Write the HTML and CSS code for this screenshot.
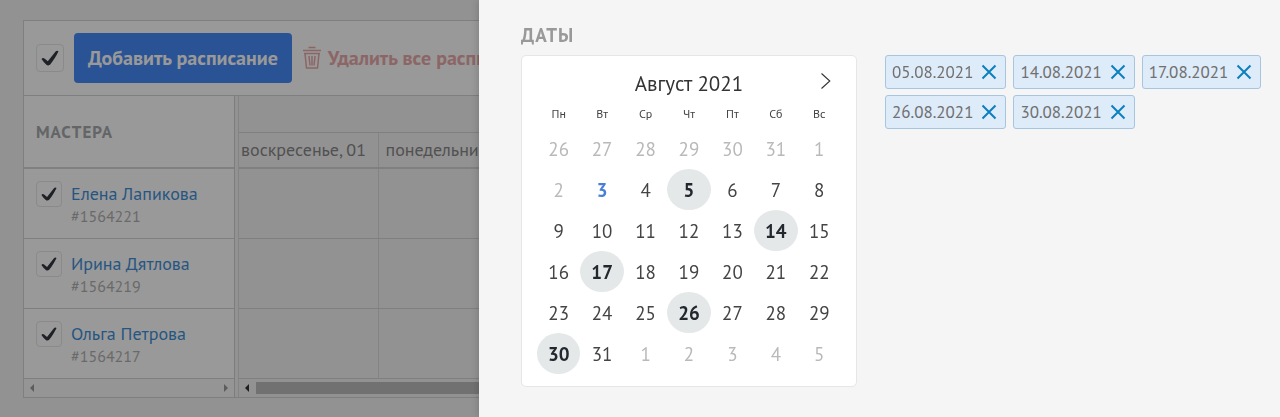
FILE: index.html
```html
<!DOCTYPE html>
<html lang="ru">
<head>
    <meta charset="UTF-8">
    <meta name="viewport" content="width=device-width, initial-scale=1.0">
    <title>Расписание мастеров</title>
    <link rel="stylesheet" href="styles.css">
</head>
<body>

    <main class="board">
        <div class="toolbar">
            <input type="checkbox" class="check check-all" aria-label="Выбрать всех" checked>
            <button type="button" class="btn-add">Добавить расписание</button>
            <button type="button" class="btn-delete">
                <svg width="20" height="24" viewBox="0 0 20 24" fill="none" stroke="currentColor" stroke-width="1.5">
                    <path d="M1 4.500h18M6.500 1.500h7M2 7.500h16M3 7.500l1.500 14.500h11L17 7.500M7 10l1 9.500M10 10v9.500M13 10l-1 9.500"/>
                </svg>
                Удалить все расписания
            </button>
        </div>

        <div class="columns">
            <section class="masters">
                <h2 class="masters-title">Мастера</h2>
                <ul class="masters-list">
                    <li class="master">
                        <input type="checkbox" class="check" id="m1564221" checked>
                        <label for="m1564221"><span class="master-name">Елена Лапикова</span><span class="master-id">#1564221</span></label>
                    </li>
                    <li class="master">
                        <input type="checkbox" class="check" id="m1564219" checked>
                        <label for="m1564219"><span class="master-name">Ирина Дятлова</span><span class="master-id">#1564219</span></label>
                    </li>
                    <li class="master">
                        <input type="checkbox" class="check" id="m1564217" checked>
                        <label for="m1564217"><span class="master-name">Ольга Петрова</span><span class="master-id">#1564217</span></label>
                    </li>
                </ul>
                <div class="scroll scroll-disabled">
                    <span class="arrow arrow-left"></span>
                    <span class="arrow arrow-right"></span>
                </div>
            </section>

            <section class="schedule">
                <table class="days">
                    <colgroup>
                        <col class="col-first">
                        <col class="col-day">
                        <col>
                    </colgroup>
                    <thead>
                        <tr class="month-row"><th colspan="3"></th></tr>
                        <tr class="day-row">
                            <th class="day-first">воскресенье, 01</th>
                            <th class="day-next">понедельник, 02</th>
                            <th></th>
                        </tr>
                    </thead>
                    <tbody>
                        <tr><td></td><td></td><td></td></tr>
                        <tr><td></td><td></td><td></td></tr>
                        <tr><td></td><td></td><td></td></tr>
                    </tbody>
                </table>
                <div class="scroll">
                    <span class="arrow arrow-left"></span>
                    <span class="thumb"></span>
                </div>
            </section>
        </div>
    </main>

    <div class="overlay"></div>

    <aside class="drawer">
        <h2 class="drawer-title">Даты</h2>
        <div class="drawer-body">
            <div class="calendar">
                <div class="calendar-head">
                    <span class="calendar-month">Август 2021</span>
                    <button type="button" class="calendar-next" aria-label="Следующий месяц">
                        <svg width="12" height="18" viewBox="0 0 12 18" fill="none" stroke="currentColor" stroke-width="1.100">
                            <path d="M1.500 1.500L9.800 9l-8.300 7.500"/>
                        </svg>
                    </button>
                </div>
                <table class="calendar-grid">
                    <thead>
                        <tr><th>Пн</th><th>Вт</th><th>Ср</th><th>Чт</th><th>Пт</th><th>Сб</th><th>Вс</th></tr>
                    </thead>
                    <tbody id="calendar-days"></tbody>
                </table>
            </div>

            <div class="tags" id="tags"></div>
        </div>
    </aside>

    <script src="script.js"></script>
</body>
</html>
```
FILE: styles.css
```css
* {
    box-sizing: border-box;
    margin: 0;
    padding: 0;
}

body {
    font-family: "PT Sans", "Noto Sans", sans-serif;
    font-size: 16px;
    background-color: #f4f4f4;
    color: #333;
    overflow: hidden;
}

button {
    font-family: inherit;
    border: none;
    background: none;
    cursor: pointer;
}

/* Board */
.board {
    margin: 20px 24px 20px 23px;
    border: 1px solid #d4d4d4;
}

.toolbar {
    display: flex;
    align-items: center;
    gap: 10px;
    height: 75px;
    padding: 0 12px;
    background-color: #fff;
    border-bottom: 1px solid #d4d4d4;
}

.check {
    appearance: none;
    flex: none;
    width: 26px;
    height: 26px;
    border: 1px solid #e6e6e6;
    border-radius: 4px;
    background: #fff center / 16px 16px no-repeat;
}

.check:checked {
    background-image: url("data:image/svg+xml,%3Csvg xmlns='http://www.w3.org/2000/svg' viewBox='0 0 18 18'%3E%3Cpath d='M.5 10c.8-1.200 2-1.200 3-.4l3.300 2.700L14.800 2.300c.8-.8 2-.8 2.700 0-2.200 4.600-4.900 9-8.300 13.300-.9 1-2.900 1.100-3.800.1C3.500 14 1.900 12 .5 10z' fill='%23333740'/%3E%3C/svg%3E");
}

.check-all {
    width: 28px;
    height: 28px;
    background-size: 18px 18px;
}

.btn-add,
.btn-delete {
    font-size: 20px;
    font-weight: 700;
    white-space: nowrap;
}

.btn-add {
    height: 50px;
    padding: 0 14px;
    border-radius: 4px;
    background-color: #478af8;
    color: #fff;
}

.btn-delete {
    display: flex;
    align-items: center;
    gap: 6px;
    color: #e9aaaa;
}

.columns {
    display: flex;
    gap: 3px;
}

.masters {
    flex: none;
    width: 211px;
    background-color: #fff;
    border-right: 1px solid #d0d0d0;
}

.masters-title,
.drawer-title {
    font-weight: 700;
    letter-spacing: 1px;
    text-transform: uppercase;
}

.masters-title {
    height: 73px;
    padding: 0 12px;
    font-size: 17px;
    line-height: 72px;
    color: #a6a8ac;
    border-bottom: 2px solid #d6d6d6;
}

.masters-list {
    list-style: none;
}

.master {
    display: flex;
    gap: 9px;
    height: 70px;
    padding: 12px 12px 0;
    border-bottom: 1px solid #d4d4d4;
}

.master-name,
.master-id {
    display: block;
    white-space: nowrap;
}

.master-name {
    font-size: 18px;
    line-height: 26px;
    color: #3f8fd8;
}

.master-id {
    font-size: 16px;
    line-height: 18px;
    color: #b0b0b0;
}

.schedule {
    flex: 1;
    min-width: 0;
    border-left: 1px solid #dcdcdc;
}

.days {
    width: 100%;
    table-layout: fixed;
    border-collapse: collapse;
}

.col-first {
    width: 139px;
}

.col-day {
    width: 144px;
}

.days th,
.days td {
    border-right: 1px solid #dcdcdc;
    border-bottom: 1px solid #d4d4d4;
    overflow: hidden;
}

.days td {
    height: 70px;
}

.month-row th {
    height: 36px;
}

.days .day-row th {
    height: 36px;
    border-bottom: 2px solid #d4d4d4;
    font-size: 18px;
    font-weight: 400;
    text-align: left;
    white-space: nowrap;
    color: #888;
}

.days .day-first {
    padding-left: 2px;
}

.days .day-next {
    padding-left: 7px;
}

.scroll {
    display: flex;
    align-items: center;
    justify-content: space-between;
    gap: 7px;
    height: 18px;
    padding: 0 6px;
    color: #333;
}

.scroll-disabled {
    color: #999;
    background-color: #f8f8f8;
}

.arrow {
    border: 4px solid transparent;
}

.arrow-left {
    border-left: none;
    border-right-color: currentColor;
}

.arrow-right {
    border-right: none;
    border-left-color: currentColor;
}

.thumb {
    flex: 1;
    height: 12px;
    background-color: #bcbcbc;
}

.overlay {
    position: fixed;
    inset: 0;
    background-color: rgba(0, 0, 0, 0.4);
}

/* Drawer */
.drawer {
    position: fixed;
    top: 0;
    right: 0;
    bottom: 0;
    left: 479px;
    padding: 24px 12px 24px 42px;
    background-color: #f5f5f5;
    box-shadow: 0 0 8px rgba(0, 0, 0, 0.2);
    overflow: hidden;
}

.drawer-title {
    margin-bottom: 9px;
    font-size: 19px;
    line-height: 22px;
    color: #999;
}

.drawer-body {
    display: flex;
    align-items: flex-start;
    gap: 28px;
}

.calendar {
    flex: none;
    width: 336px;
    padding: 12px 15px;
    background-color: #fff;
    border: 1px solid #e6e6e6;
    border-radius: 5px;
}

.calendar-head {
    display: grid;
    grid-template-columns: 1fr auto 1fr;
    align-items: center;
    height: 30px;
}

.calendar-month {
    grid-column: 2;
    font-size: 21px;
    color: #333;
}

.calendar-next {
    justify-self: end;
    height: 28px;
    padding: 0 9px;
    color: #333;
}

.calendar-grid {
    width: 100%;
    table-layout: fixed;
    border-collapse: collapse;
}

.calendar-grid th {
    height: 30px;
    font-size: 12px;
    font-weight: 400;
    color: #444;
}

.day {
    display: block;
    width: 100%;
    height: 41px;
    border-radius: 50%;
    font-size: 19px;
    color: #444;
}

.day-other {
    color: #b9b9b9;
}

.day-today {
    color: #4a7fd6;
    font-weight: 700;
}

.day-selected {
    background-color: #e4e8e9;
    color: #23272e;
    font-weight: 700;
}

/* Selected dates */
.tags {
    display: flex;
    flex-wrap: wrap;
    gap: 6px 7px;
}

.tag {
    display: flex;
    align-items: center;
    gap: 8px;
    height: 34px;
    padding: 0 8px 0 6px;
    border: 1px solid #a6c5e0;
    border-radius: 3px;
    background-color: #deebf9;
    font-size: 17px;
    color: #707070;
}

.tag-remove {
    display: flex;
    color: #0b80be;
}
```
FILE: script.js
```javascript
const today = 3;
const selected = [5, 14, 17, 26, 30];

// The grid starts on Monday, 26 July
const calendarDays = document.getElementById('calendar-days');
for (let week = 0; week < 6; week++) {
    const row = document.createElement('tr');
    for (let i = 0; i < 7; i++) {
        const date = new Date(2021, 6, 26 + week * 7 + i);
        const day = date.getDate();
        const inMonth = date.getMonth() === 7;
        let type = '';
        // 1 August is already in the past, so it is greyed out too
        if (!inMonth || day < today) {
            type = 'day-other';
        } else if (day === today) {
            type = 'day-today';
        } else if (selected.includes(day)) {
            type = 'day-selected';
        }
        row.innerHTML += `<td><button type="button" class="day ${type}">${day}</button></td>`;
    }
    calendarDays.appendChild(row);
}

document.getElementById('tags').innerHTML = selected.map(day => `
    <div class="tag">
        <span>${String(day).padStart(2, '0')}.08.2021</span>
        <button type="button" class="tag-remove" aria-label="Удалить">
            <svg width="16" height="16" viewBox="0 0 16 16" fill="none" stroke="currentColor" stroke-width="2">
                <path d="M1.500 1.500l13 13M14.500 1.500l-13 13"/>
            </svg>
        </button>
    </div>
`).join('');
```
